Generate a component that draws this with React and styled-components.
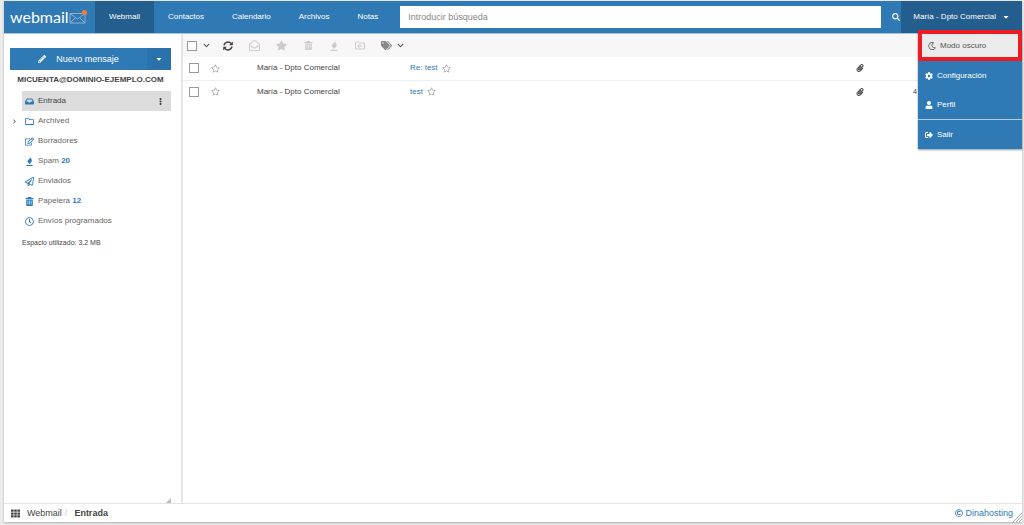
import React from "react";
import styled, { createGlobalStyle, css } from "styled-components";
import {
  FaPencilAlt,
  FaCaretDown,
  FaSearch,
  FaInbox,
  FaEllipsisV,
  FaRegFolder,
  FaRegEdit,
  FaRegPaperPlane,
  FaRegClock,
  FaRegMoon,
  FaCog,
  FaUser,
  FaSignOutAlt,
  FaPaperclip,
  FaRegStar,
  FaStar,
  FaTags,
  FaRegEnvelopeOpen,
  FaTh,
  FaRegCopyright,
  FaChevronRight,
  FaChevronDown
} from "react-icons/fa";

const GlobalStyle = createGlobalStyle`
  *, *::before, *::after {
    box-sizing: border-box;
  }

  body {
    margin: 0;
    background: #ebebeb;
    color: #444;
    font-family: "Liberation Sans", Arial, sans-serif;
    font-size: 8px;
    line-height: 12px;
  }

  a {
    color: inherit;
    text-decoration: none;
  }

  button {
    display: inline-flex;
    align-items: center;
    padding: 0;
    border: 0;
    background: none;
    color: inherit;
    font: inherit;
    cursor: pointer;
  }

  svg {
    display: block;
    flex: none;
  }
`;

const Page = styled.div`
  display: flex;
  flex-direction: column;
  min-height: 100vh;
  padding: 1px 2px 3px 4px;
`;

const Window = styled.div`
  display: flex;
  flex: 1;
  flex-direction: column;
  background: white;
  box-shadow: 0 1px 2px rgba(0, 0, 0, 0.25);
`;

// ======= Header START ========
const Header = styled.header`
  position: relative;
  z-index: 1;
  display: flex;
  align-items: stretch;
  height: 33px;
  background: #2f7ab5;
  border-bottom: 1px solid #a5c4de;
  color: white;
`;

const Logo = styled.a`
  display: flex;
  align-items: center;
  width: 91px;
  padding-left: 6px;
  font-family: Lato, "Open Sans", sans-serif;
  font-size: 16px;
  line-height: 20px;
`;

const Nav = styled.nav`
  display: flex;
`;

const NavLink = styled.a`
  display: flex;
  align-items: center;
  padding: 0 14px;
  background: ${props => (props.$active ? "#245e8e" : "transparent")};
`;

const SearchForm = styled.form`
  display: flex;
  flex: 1;
  align-items: center;
  margin-left: 8px;
`;

const SearchInput = styled.input`
  flex: 1;
  min-width: 0;
  height: 22px;
  padding: 0 8px;
  border: 0;
  border-radius: 0;
  background: white;
  color: #555;
  font: inherit;
  font-size: 9px;

  &::placeholder {
    color: #888;
    opacity: 1;
  }
`;

const SearchButton = styled.button`
  padding: 0 1px 0 11px;
`;

const UserArea = styled.div`
  position: relative;
  display: flex;
`;

const UserButton = styled.button`
  gap: 6px;
  padding: 0 12px;
  background: #245e8e;
`;

const UserMenu = styled.ul`
  position: absolute;
  top: 29px;
  right: 0;
  width: 104px;
  margin: 0;
  padding: 0;
  list-style: none;
  background: #2f7ab5;
  box-shadow: 0 1px 2px rgba(0, 0, 0, 0.4);
`;

const MenuItem = styled.li`
  ${props =>
    props.$divided &&
    css`
      border-top: 1px solid #b5cde1;
    `}
`;

const MenuLink = styled.a`
  display: flex;
  align-items: center;
  gap: 4px;
  height: 29px;
  padding: 0 7px;

  ${props =>
    props.$highlighted &&
    css`
      height: 31px;
      padding: 0 6px;
      border: 4px solid #ed1c24;
      background: #ebebeb;
      color: #555;
    `}
`;
// ======= Header END ========

const Main = styled.div`
  display: flex;
  flex: 1;
`;

// ======= Sidebar START ========
const Sidebar = styled.aside`
  display: flex;
  flex-direction: column;
  width: 179px;
  padding: 14px 10px 0 6px;
  border-right: 2px solid #e4e4e4;
`;

const Compose = styled.div`
  display: flex;
  height: 22px;
  background: #2f7ab5;
  color: white;
`;

const ComposeButton = styled.button`
  flex: 1;
  gap: 10px;
  justify-content: center;
  font-size: 9px;
`;

const ComposeToggle = styled.button`
  justify-content: center;
  width: 24px;
  background: #2a72ab;
`;

const Account = styled.h2`
  margin: 4px 0 5px;
  font-size: 8px;
  line-height: 12px;
  text-align: center;
  text-transform: uppercase;
  white-space: nowrap;
`;

const Folders = styled.ul`
  margin: 0;
  padding: 0;
  list-style: none;
`;

const Folder = styled.li`
  display: flex;
  align-items: center;
  height: 20px;
  color: #666;
`;

const Expander = styled.span`
  display: flex;
  width: 12px;
  padding-left: 2px;
`;

const FolderLink = styled.a`
  display: flex;
  flex: 1;
  align-items: center;
  gap: 4px;
  height: 20px;
  padding: 0 7px 0 3px;

  ${props =>
    props.$active &&
    css`
      background: #dcdcdc;
      color: #444;
    `}
`;

const FolderIcon = styled.span`
  display: flex;
  color: #2f7ab5;
`;

const Count = styled.strong`
  color: #2f7ab5;
`;

const MoreIcon = styled(FaEllipsisV)`
  margin-left: auto;
`;

const Quota = styled.p`
  margin: 6px 12px;
  font-size: 7px;
`;

const Resizer = styled.div`
  align-self: flex-end;
  margin-top: auto;
`;
// ======= Sidebar END ========

// ======= Messages START ========
const Content = styled.main`
  flex: 1;
  min-width: 0;
`;

const Toolbar = styled.div`
  display: flex;
  align-items: center;
  gap: 16px;
  height: 23px;
  padding: 0 4px;
  background: #f7f7f7;
  color: #ccc;
`;

const SelectAll = styled.div`
  display: flex;
  align-items: center;
  gap: 6px;
  margin-right: -3px;
  color: #555;
`;

const ToolButton = styled.button`
  justify-content: center;
  gap: 5px;
  min-width: 10px;
  color: ${props => props.$color || "inherit"};
`;

const Checkbox = styled.input`
  display: block;
  width: 10px;
  height: 10px;
  margin: 0;
  appearance: none;
  border: 1px solid #999;
  background: white;
`;

const MessageTable = styled.table`
  width: 100%;
  border-collapse: collapse;
  table-layout: fixed;
`;

const MessageRow = styled.tr`
  height: 23px;
  border-bottom: 1px solid #eee;

  &:last-child {
    border-bottom: 0;
  }
`;

const Cell = styled.td`
  width: ${props => props.$width || "auto"};
  padding: 0 0 0 ${props => props.$indent || "0"};
  font-size: ${props => props.$size || "8px"};
  white-space: nowrap;
`;

const Subject = styled.div`
  display: flex;
  align-items: center;
  gap: 4px;
  color: #2f7ab5;
`;

const StarButton = styled.button`
  display: flex;
  color: #aaa;
`;
// ======= Messages END ========

const Footer = styled.footer`
  display: flex;
  align-items: center;
  height: 19px;
  padding-left: 7px;
  border-top: 1px solid #e4e4e4;
  font-size: 9px;
`;

const Breadcrumb = styled.nav`
  display: flex;
  flex: 1;
  align-items: center;
  gap: 7px;
`;

const Separator = styled.span`
  margin: 0 0 0 -4px;
  color: #ccc;
`;

const Credit = styled.a`
  display: flex;
  align-items: center;
  gap: 2px;
  color: #2f7ab5;
`;

const Grip = styled.svg`
  align-self: flex-end;
`;

const LogoEnvelope = () => (
  <svg width="19" height="16" viewBox="0 0 19 16" fill="none">
    <path
      d="M1 4.5h15v9.500H1zM1 4.500l7.500 5.500L16 4.500M1 14l5.500-5.500M16 14l-5.500-5.500"
      stroke="#8fb0c8"
      strokeWidth="1"
    />
    <circle cx="15.500" cy="3.500" r="2.500" fill="#f47b30" />
  </svg>
);

const FireIcon = ({ size = 9 }) => (
  <svg width={size} height={size} viewBox="0 0 10 10" fill="currentColor">
    <path d="M6 0C6.200 1.300 7.800 2.300 7.600 4.300 7.500 6 6 6.800 4.600 8.200 4.700 7.300 4.300 6.700 3.500 6.200 2.400 5.200 2.700 4 3.700 3.100 4.800 2.200 5.900 1.500 6 0z" />
    <path d="M1.500 8.800h7v1.200h-7z" />
  </svg>
);

const MoveIcon = () => (
  <svg width="10" height="9" viewBox="0 0 10 9" fill="none" stroke="currentColor">
    <path d="M.5 1.500v6.500h9v-6H4.500l-1-1H.5zM7.500 5H3M4.700 3.400L3 5l1.700 1.600" />
  </svg>
);

const TrashIcon = ({ size = 9 }) => (
  <svg width={size} height={size} viewBox="0 0 9 9">
    <path
      fill="currentColor"
      fillRule="evenodd"
      d="M3 0h3l.6 1H8.500v1H.5V1h1.900zM1.200 2.500h6.600V8.200a.8.800 0 0 1-.8.800H2a.8.800 0 0 1-.8-.8zM2.600 3.600v4h.6v-4zM4.200 3.600v4h.6v-4zM5.800 3.600v4h.6v-4z"
    />
  </svg>
);

const RefreshIcon = () => (
  <svg width="10" height="10" viewBox="0 0 10 10">
    <path
      d="M1 4.300A4 4 0 0 1 8 2.500M9 5.700A4 4 0 0 1 2 7.500"
      fill="none"
      stroke="currentColor"
      strokeWidth="1.600"
    />
    <path d="M9.800.4v3.800H6zM.2 9.600V5.800H4z" fill="currentColor" />
  </svg>
);

const folders = [
  { name: "Entrada", icon: <FaInbox size={9} />, active: true },
  { name: "Archived", icon: <FaRegFolder size={9} />, children: true },
  { name: "Borradores", icon: <FaRegEdit size={9} /> },
  { name: "Spam", icon: <FireIcon />, count: 20 },
  { name: "Enviados", icon: <FaRegPaperPlane size={9} /> },
  { name: "Papelera", icon: <TrashIcon />, count: 12 },
  { name: "Envíos programados", icon: <FaRegClock size={9} /> }
];

const messages = [
  { id: 1, from: "María - Dpto Comercial", subject: "Re: test", size: "" },
  { id: 2, from: "María - Dpto Comercial", subject: "test", size: "4 KB" }
];

const tools = [
  { label: "Actualizar", icon: <RefreshIcon />, color: "#444" },
  { label: "Marcar como leído", icon: <FaRegEnvelopeOpen size={11} /> },
  { label: "Destacar", icon: <FaStar size={11} /> },
  { label: "Eliminar", icon: <TrashIcon /> },
  { label: "Spam", icon: <FireIcon size={10} /> },
  { label: "Mover", icon: <MoveIcon /> }
];

const AppHeader = () => (
  <Header>
    <Logo href="#">
      webmail
      <LogoEnvelope />
    </Logo>
    <Nav>
      <NavLink href="#" $active>
        Webmail
      </NavLink>
      <NavLink href="#">Contactos</NavLink>
      <NavLink href="#">Calendario</NavLink>
      <NavLink href="#">Archivos</NavLink>
      <NavLink href="#">Notas</NavLink>
    </Nav>
    <SearchForm>
      <SearchInput
        type="text"
        aria-label="Introducir búsqueda"
        placeholder="Introducir búsqueda"
      />
      <SearchButton type="button" aria-label="Buscar">
        <FaSearch size={8} />
      </SearchButton>
    </SearchForm>
    <UserArea>
      <UserButton type="button">
        María - Dpto Comercial
        <FaCaretDown size={8} />
      </UserButton>
      <UserMenu>
        <MenuItem>
          <MenuLink href="#" $highlighted>
            <FaRegMoon size={8} />
            Modo oscuro
          </MenuLink>
        </MenuItem>
        <MenuItem>
          <MenuLink href="#">
            <FaCog size={8} />
            Configuración
          </MenuLink>
        </MenuItem>
        <MenuItem>
          <MenuLink href="#">
            <FaUser size={8} />
            Perfil
          </MenuLink>
        </MenuItem>
        <MenuItem $divided>
          <MenuLink href="#">
            <FaSignOutAlt size={8} />
            Salir
          </MenuLink>
        </MenuItem>
      </UserMenu>
    </UserArea>
  </Header>
);

const FolderList = () => (
  <Sidebar>
    <Compose>
      <ComposeButton type="button">
        <FaPencilAlt size={8} />
        Nuevo mensaje
      </ComposeButton>
      <ComposeToggle type="button" aria-label="Más opciones">
        <FaCaretDown size={8} />
      </ComposeToggle>
    </Compose>
    <Account>micuenta@dominio-ejemplo.com</Account>
    <Folders>
      {folders.map(folder => (
        <Folder key={folder.name}>
          <Expander>{folder.children && <FaChevronRight size={5} />}</Expander>
          <FolderLink href="#" $active={folder.active}>
            <FolderIcon>{folder.icon}</FolderIcon>
            <span>
              {folder.name} {folder.count && <Count>{folder.count}</Count>}
            </span>
            {folder.active && <MoreIcon size={7} />}
          </FolderLink>
        </Folder>
      ))}
    </Folders>
    <Quota>Espacio utilizado: 3.2 MB</Quota>
    <Resizer>
      <svg width="5" height="5" viewBox="0 0 5 5">
        <path d="M5 0v5H0z" fill="#bbb" />
      </svg>
    </Resizer>
  </Sidebar>
);

const MessageList = () => (
  <Content>
    <Toolbar>
      <SelectAll>
        <Checkbox type="checkbox" aria-label="Seleccionar todo" />
        <FaChevronDown size={7} />
      </SelectAll>
      {tools.map(tool => (
        <ToolButton
          key={tool.label}
          type="button"
          aria-label={tool.label}
          $color={tool.color}
        >
          {tool.icon}
        </ToolButton>
      ))}
      <ToolButton type="button" aria-label="Etiquetas" $color="#888">
        <FaTags size={11} />
        <FaChevronDown size={7} color="#555" />
      </ToolButton>
    </Toolbar>
    <MessageTable>
      <tbody>
        {messages.map(message => (
          <MessageRow key={message.id}>
            <Cell $width="28px" $indent="6px">
              <Checkbox
                type="checkbox"
                aria-label={`Seleccionar ${message.subject}`}
              />
            </Cell>
            <Cell $width="46px">
              <StarButton type="button" aria-label="Destacar">
                <FaRegStar size={9} />
              </StarButton>
            </Cell>
            <Cell $width="153px">{message.from}</Cell>
            <Cell>
              <Subject>
                <a href="#">{message.subject}</a>
                <StarButton type="button" aria-label="Destacar">
                  <FaRegStar size={9} />
                </StarButton>
              </Subject>
            </Cell>
            <Cell $width="57px">
              <FaPaperclip size={8} />
            </Cell>
            <Cell $width="109px" $size="7px">
              {message.size}
            </Cell>
          </MessageRow>
        ))}
      </tbody>
    </MessageTable>
  </Content>
);

const App = () => (
  <Page>
    <GlobalStyle />
    <Window>
      <AppHeader />
      <Main>
        <FolderList />
        <MessageList />
      </Main>
      <Footer>
        <Breadcrumb>
          <FaTh size={9} />
          <a href="#">Webmail</a>
          <Separator>/</Separator>
          <strong>Entrada</strong>
        </Breadcrumb>
        <Credit href="#">
          <FaRegCopyright size={8} />
          Dinahosting
        </Credit>
        <Grip width="9" height="9" viewBox="0 0 9 9" stroke="#aaa">
          <path d="M0 9L9 0M3 9L9 3M6 9L9 6" />
        </Grip>
      </Footer>
    </Window>
  </Page>
);

export default App;
